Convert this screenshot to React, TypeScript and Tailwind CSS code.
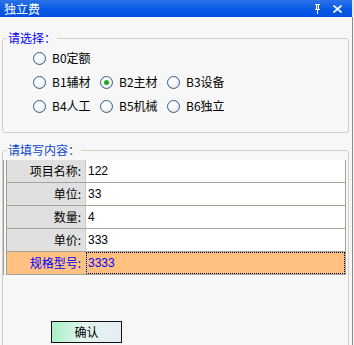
import React from "react";

const cjk = { fontFamily: '"Noto Sans CJK SC", "Liberation Sans", sans-serif' };

function Radio({ label, checked = false }: { label: string; checked?: boolean }) {
  return (
    <div className="flex items-center gap-[6px]">
      <span className="w-[13px] h-[13px] rounded-full border border-[#2f5f8f] bg-[radial-gradient(circle_at_40%_35%,#ffffff_30%,#d8dbd8_100%)] flex items-center justify-center">
        {checked && <span className="w-[5px] h-[5px] rounded-full bg-[#21a821]" />}
      </span>
      <span className="text-[12px] leading-[14px] text-black">{label}</span>
    </div>
  );
}

const rows = [
  { label: "项目名称:", value: "122" },
  { label: "单位:", value: "33" },
  { label: "数量:", value: "4" },
  { label: "单价:", value: "333" },
];

export default function App() {
  return (
    <div className="w-[354px] h-[345px] overflow-hidden bg-[#f7f7f7] flex flex-col" style={cjk}>
      {/* title bar */}
      <div className="h-[17px] shrink-0 flex items-center pl-[4px] pr-[10px] bg-[linear-gradient(to_bottom,#2c72ea,#0558e4_60%,#0050df)] border-r-2 border-[#e4e4e4]">
        <span className="text-white text-[12px] leading-[14px] flex-1">独立费</span>
        <svg width="7" height="10" viewBox="0 0 7 10" className="mr-[12px]" shapeRendering="crispEdges">
          <path d="M1 0h5v1H5v4h1v1H4v4H3V6H1V5h1V1H1z" fill="#fff" />
          <path d="M3 1h1v4H3z" fill="#4a86ee" />
        </svg>
        <svg width="9" height="8" viewBox="0 0 9 8">
          <path d="M0.5 0.5L8.5 7.5M8.5 0.5L0.5 7.5" stroke="#fff" strokeWidth="1.6" />
        </svg>
      </div>

      <div className="w-[353px] flex-1 flex flex-col pl-[2px] pr-[3px] border-r border-[#8c8c8c]">
        {/* group 1 */}
        <fieldset className="mt-[14px] h-[102px] border border-[#d0d0bf] rounded-[3px]">
          <legend className="ml-[4px] px-[1px] text-[12px] leading-[14px] text-[#0000ff]">请选择：</legend>
          <div className="pt-[1px] pl-[30px] grid grid-cols-[67px_67px_67px]">
            <div className="h-[24px] flex items-center"><Radio label="B0定额" /></div>
            <div />
            <div />
            <div className="h-[24px] flex items-center"><Radio label="B1辅材" /></div>
            <div className="h-[24px] flex items-center"><Radio label="B2主材" checked /></div>
            <div className="h-[24px] flex items-center"><Radio label="B3设备" /></div>
            <div className="h-[24px] flex items-center"><Radio label="B4人工" /></div>
            <div className="h-[24px] flex items-center"><Radio label="B5机械" /></div>
            <div className="h-[24px] flex items-center"><Radio label="B6独立" /></div>
          </div>
        </fieldset>

        {/* group 2 */}
        <fieldset className="mt-[10px] h-[240px] border border-[#d0d0bf] rounded-[3px]">
          <legend className="ml-[4px] px-[1px] text-[12px] leading-[14px] text-[#0a46d6]">请填写内容：</legend>
          <div className="mt-[3px] mr-[2px] border-l border-[#a09f96] pl-[2px]">
            <div className="border-l border-r border-[#a09f96]">
              {rows.map((r) => (
                <div key={r.label} className="h-[23px] flex border-b border-[#a8a597]">
                  <div className="w-[79px] bg-[#e0e0e0] border-r border-[#c8c8c8] flex items-center justify-end pr-[4px] text-[12px] text-black">
                    {r.label}
                  </div>
                  <div className="flex-1 bg-white flex items-center pl-[2px] text-[12px] text-black" style={{ fontFamily: '"Liberation Sans", sans-serif' }}>
                    {r.value}
                  </div>
                </div>
              ))}
              <div className="h-[23px] flex border-b border-[#a8a597] bg-[#ffc080]">
                <div className="w-[79px] border-r border-[#c8c8c8] flex items-center justify-end pr-[4px] text-[12px] text-[#0000ff]">
                  规格型号:
                </div>
                <div className="flex-1 border border-dotted border-black flex items-center pl-[1px] text-[12px] text-[#0000ff]" style={{ fontFamily: '"Liberation Sans", sans-serif' }}>
                  3333
                </div>
              </div>
            </div>
          </div>
          <button className="mt-[46px] ml-[48px] w-[71px] h-[22px] border border-[#111] bg-[linear-gradient(100deg,#a6f0c6_0%,#e2f4ec_45%,#e6ecf6_100%)] text-[12px] text-black flex items-center justify-center">
            确认
          </button>
        </fieldset>
      </div>
    </div>
  );
}
